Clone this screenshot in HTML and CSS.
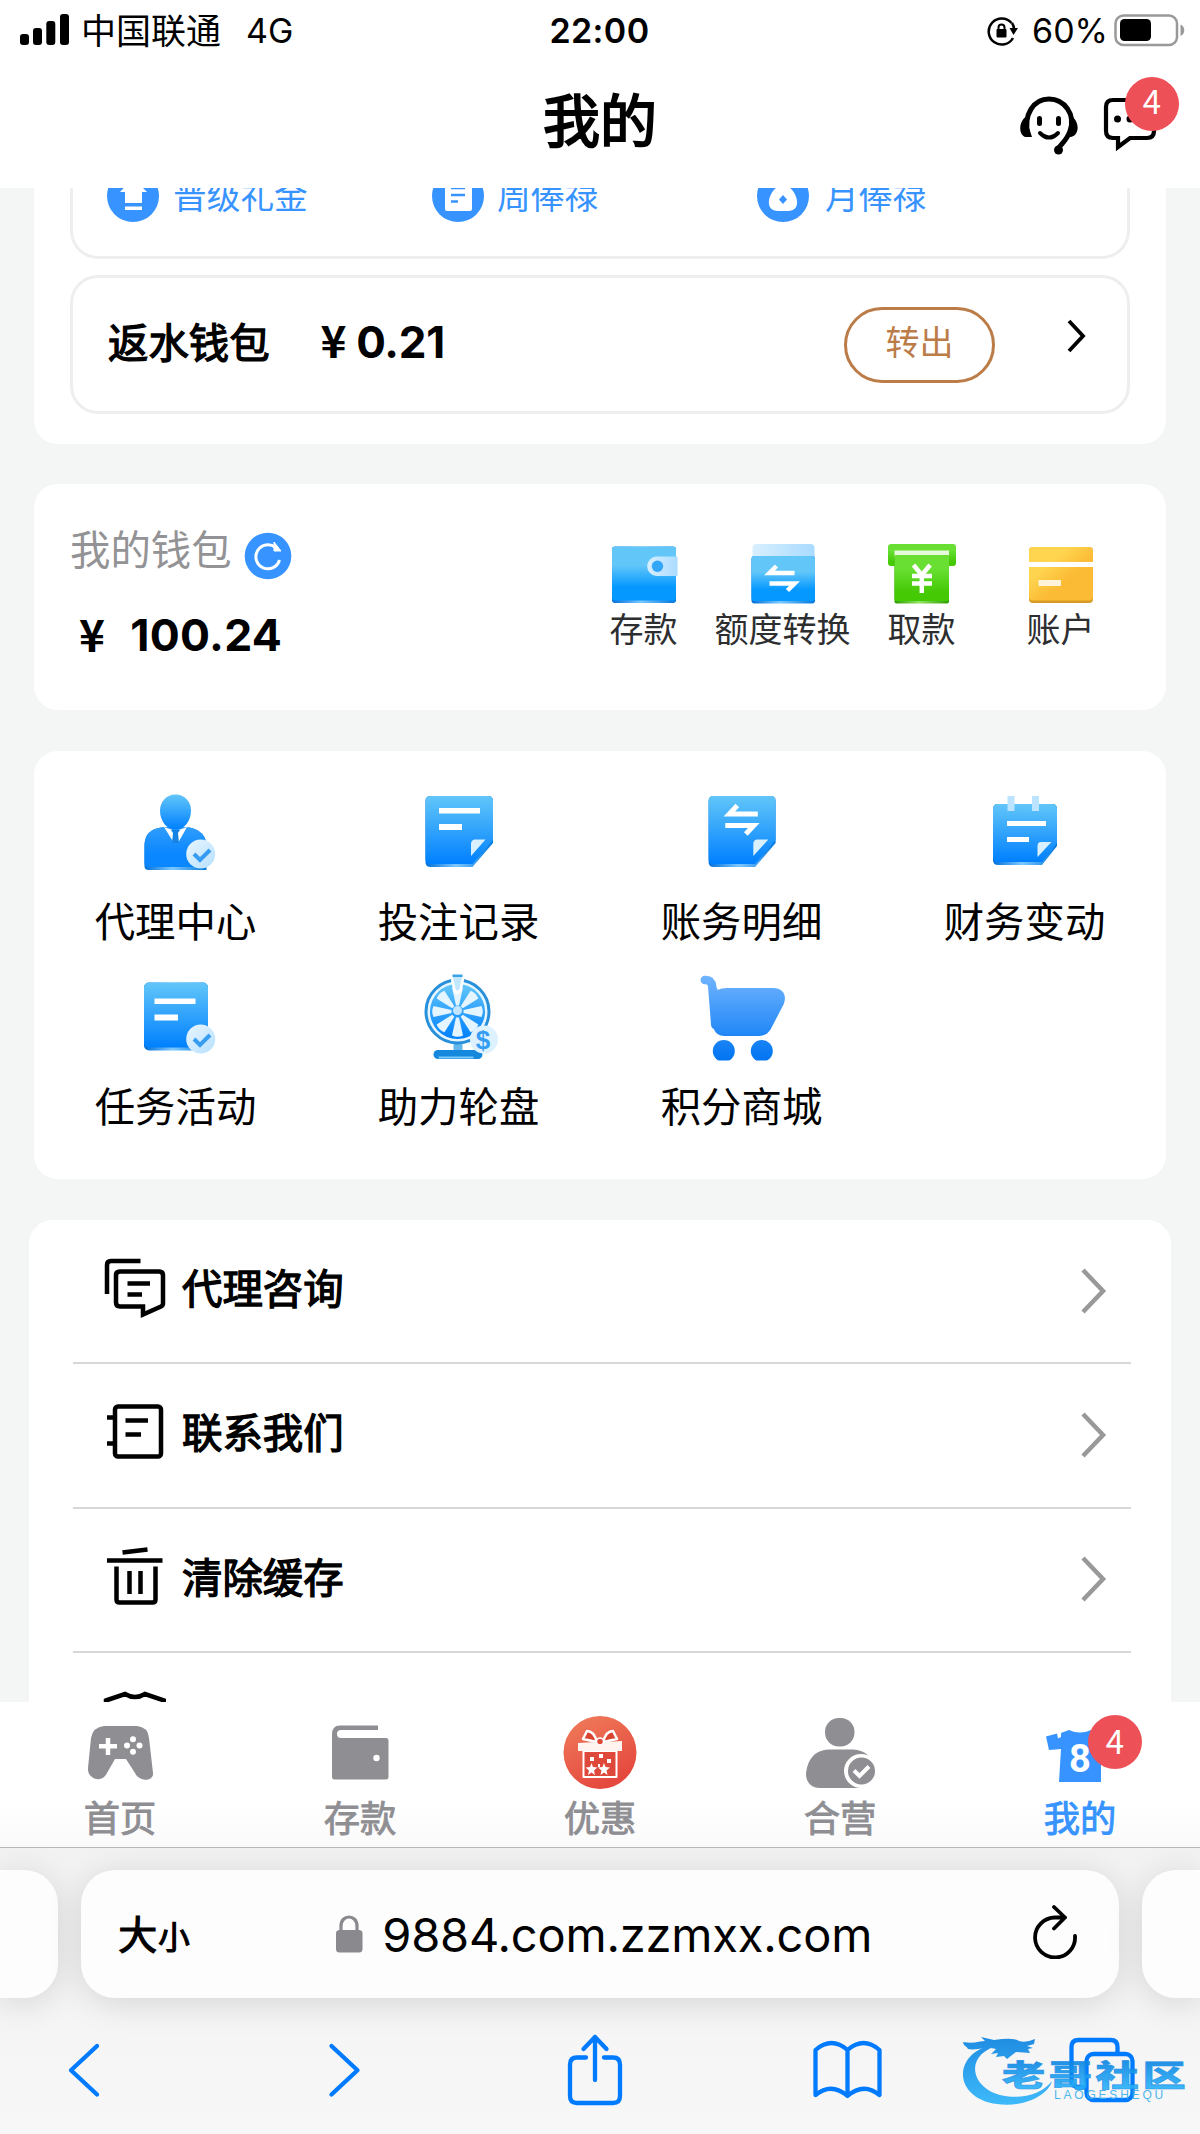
FILE: index.html
```html
<!DOCTYPE html>
<html lang="zh-CN">
<head>
<meta charset="utf-8">
<title>我的</title>
<link rel="stylesheet" href="styles.css">
</head>
<body>
<svg class="defs" width="0" height="0" aria-hidden="true">
  <defs>
    <linearGradient id="blue" x1="0" y1="0" x2="0" y2="1"><stop offset="0" stop-color="#62c6f9"/><stop offset="1" stop-color="#0080ff"/></linearGradient>
    <linearGradient id="body" x1="0" y1="0" x2="0" y2="1"><stop offset="0" stop-color="#2f9dfc"/><stop offset=".7" stop-color="#0a86ff"/></linearGradient>
    <linearGradient id="wallet" x1="0" y1="0" x2="0" y2="1"><stop offset=".35" stop-color="#62c6f9"/><stop offset=".75" stop-color="#0598ff"/></linearGradient>
    <linearGradient id="pale" x1="0" y1="0" x2="1" y2="0"><stop offset="0" stop-color="#d8efff"/><stop offset="1" stop-color="#a9dbff"/></linearGradient>
    <linearGradient id="coin" x1="0" y1="0" x2="1" y2="1"><stop offset="0" stop-color="#eaf6ff"/><stop offset="1" stop-color="#b5e0ff"/></linearGradient>
    <linearGradient id="green" x1="0" y1="0" x2="0" y2="1"><stop offset=".3" stop-color="#68df32"/><stop offset=".8" stop-color="#45c905"/></linearGradient>
    <linearGradient id="gold" x1="0" y1="0" x2="1" y2="1"><stop offset=".3" stop-color="#ffd550"/><stop offset=".6" stop-color="#fbbb35"/></linearGradient>
    <linearGradient id="edge" x1="0" y1="0" x2="1" y2="0"><stop offset="0" stop-color="#006fd9"/><stop offset=".45" stop-color="#7cc8ff"/><stop offset="1" stop-color="#0077dc"/></linearGradient>
    <linearGradient id="gedge" x1="0" y1="0" x2="1" y2="0"><stop offset="0" stop-color="#2da000"/><stop offset=".45" stop-color="#91e55f"/><stop offset="1" stop-color="#2da000"/></linearGradient>
    <linearGradient id="cart" gradientUnits="userSpaceOnUse" x1="0" y1="976" x2="0" y2="1061"><stop offset="0" stop-color="#70b4ff"/><stop offset="1" stop-color="#0074f2"/></linearGradient>
    <linearGradient id="gift" x1="0" y1="0" x2=".5" y2="1"><stop offset="0" stop-color="#f07e5c"/><stop offset="1" stop-color="#e5483e"/></linearGradient>
    <linearGradient id="mark" gradientUnits="userSpaceOnUse" x1="0" y1="2042" x2="0" y2="2108"><stop offset="0" stop-color="#0b84e2"/><stop offset="1" stop-color="#2bb5fb"/></linearGradient>
    <linearGradient id="markText" x1="0" y1="0" x2="0" y2="1"><stop offset=".15" stop-color="#087fdf"/><stop offset=".9" stop-color="#2bb5fb"/></linearGradient>
  </defs>
</svg>

<header class="top">
  <div class="status">
    <div class="status-left">
      <svg width="49" height="31" viewBox="20 13 49 31"><rect x="20" y="33" width="9" height="11" rx="3"/><rect x="33" y="27" width="9" height="17" rx="3"/><rect x="46.300" y="20" width="9" height="24" rx="3"/><rect x="60" y="13" width="9" height="31" rx="3"/></svg>
      <span class="carrier">中国联通</span><span class="network">4G</span>
    </div>
    <div class="clock">22:00</div>
    <div class="status-right">
      <svg width="31" height="30" viewBox="987 16 31 30"><path d="M1011.500 23a13 13 0 1 0 1.500 15M1012 23q2 3 2 6" fill="none" stroke="#000" stroke-width="2.500"/><path d="M1009.500 28h8.500l-4.500 7z"/><rect x="996.500" y="29" width="10" height="8.500" rx="1"/><path d="M998.500 30v-2.500a3 3 0 0 1 6 0V30" fill="none" stroke="#000" stroke-width="2"/></svg>
      <span class="percent">60%</span>
      <svg width="72" height="34" viewBox="1113 12 72 34"><rect x="1115.500" y="14.500" width="61.500" height="29.500" rx="8" fill="none" stroke="#999" stroke-width="2.500"/><rect x="1120" y="18" width="31" height="22" rx="4.500"/><path d="M1180.500 23.500c5 2 5 9.500 0 11.500z" fill="#999"/></svg>
    </div>
  </div>
  <div class="titlebar">
    <h1>我的</h1>
    <div class="title-actions">
      <svg width="60" height="62" viewBox="1019 94 60 62"><path d="M1028 134c-5-21 6-36 21-36s27 15 21 32c-3 9-8 12-12 18" fill="none" stroke="#000" stroke-width="5"/><path d="M1027 115c-9 5-9 21 0 21h5l-3-9zM1071 115c9 5 9 20-1 21l-1-9z"/><circle cx="1058.500" cy="149" r="4.500"/><rect x="1037" y="115" width="5" height="10" rx="2.500"/><rect x="1056" y="115" width="5" height="10" rx="2.500"/><path d="M1040 132q9 9 18 0" fill="none" stroke="#000" stroke-width="4" stroke-linecap="round"/></svg>
      <div class="message">
        <svg width="54" height="58" viewBox="1103 95 54 58"><path d="M1113 100h34q7 0 7 7v24q0 7-7 7h-17l-12 9v-9h-5q-7 0-7-7v-24q0-7 7-7z" fill="none" stroke="#000" stroke-width="4.200"/><circle cx="1117.500" cy="119" r="3.500"/><circle cx="1130" cy="119" r="3.500"/></svg>
        <span class="badge">4</span>
      </div>
    </div>
  </div>
</header>

<main class="content">
  <section class="card bonus-card">
    <div class="bonus-row">
      <div class="bonus"><svg width="52" height="52" viewBox="107 170 52 52"><circle cx="133" cy="196" r="26" fill="#3793ff"/><path d="M133 178l14 14h-5v11h-17v-11h-5zM125 206.500h17v3.500h-17z" fill="#fff"/></svg><span>晋级礼金</span></div>
      <div class="bonus weekly"><svg width="52" height="52" viewBox="107 170 52 52"><circle cx="133" cy="196" r="26" fill="#3793ff"/><rect x="120" y="181" width="27" height="30" rx="2" fill="#fff"/><path d="M126 188h14M126 195h14M126 201.500h7" stroke="#3793ff" stroke-width="2.500"/></svg><span>周俸禄</span></div>
      <div class="bonus monthly"><svg width="52" height="52" viewBox="107 170 52 52"><circle cx="133" cy="196" r="26" fill="#3793ff"/><path d="M127 187l-3-8h18l-3 8c10 8 12 24-1 24h-10c-13 0-11-16-1-24z" fill="#fff"/><path d="M133 195l4 4.500-4 4.500-4-4.500z" fill="#3793ff"/></svg><span>月俸禄</span></div>
    </div>
    <div class="rebate">
      <span class="rebate-name">返水钱包</span>
      <span class="rebate-value"><i class="yen">¥</i>0.21</span>
      <button class="transfer">转出</button>
      <svg class="rebate-arrow" width="22" height="36" viewBox="0 0 22 36"><path d="M3 3l14 15L3 33" fill="none" stroke="#000" stroke-width="3.800"/></svg>
    </div>
  </section>

  <section class="card wallet-card">
    <div class="balance">
      <div class="balance-label"><span>我的钱包</span><svg width="48" height="48" viewBox="0 0 48 48"><circle cx="24" cy="24" r="23.300" fill="#3793ff"/><path d="M31.500 15.500A12 12 0 1 0 35.500 28" fill="none" stroke="#fff" stroke-width="3"/><path d="M30 10v9h7z" fill="#fff" stroke="#fff" stroke-width="1"/></svg></div>
      <div class="balance-value"><i class="yen">¥</i>100.24</div>
    </div>
    <nav class="wallet-actions">
      <a><svg width="70" height="62" viewBox="609 545 70 62"><rect x="612" y="547.500" width="64" height="56.500" rx="3" fill="url(#edge)"/><rect x="612" y="547.500" width="64" height="54" rx="3" fill="url(#wallet)"/><path d="M656 557.500h21.500v19.500H656a9.800 9.800 0 0 1 0-19.500z" fill="url(#pale)"/><circle cx="657.500" cy="567.300" r="5.700" fill="#32a7fa"/></svg><span>存款</span></a>
      <a><svg width="70" height="62" viewBox="747.500 545 70 62"><rect x="752" y="545" width="62" height="24" rx="4" fill="url(#pale)"/><rect x="751" y="557" width="63.500" height="47.500" rx="3" fill="url(#edge)"/><rect x="751" y="557" width="63.500" height="45" rx="3" fill="url(#wallet)"/><path d="M794 574h-25l7-7M769 584.500h25l-7 7" fill="none" stroke="#fff" stroke-width="4.500"/></svg><span>额度转换</span></a>
      <a><svg width="70" height="62" viewBox="887 545 70 62"><rect x="888" y="545" width="68" height="22" rx="3" fill="url(#green)"/><rect x="894.500" y="551.500" width="54.500" height="8" fill="#e5f9db"/><rect x="894.500" y="556" width="54.500" height="48.500" rx="2" fill="url(#gedge)"/><rect x="894.500" y="556" width="54.500" height="46" rx="2" fill="url(#green)"/><path d="M913.500 566l8.300 10 8.300-10M912 577h20M912 584.500h20M921.800 576v18" fill="none" stroke="#fff" stroke-width="4.500"/></svg><span>取款</span></a>
      <a><svg width="70" height="62" viewBox="1026 545 70 62"><rect x="1029" y="548" width="64" height="56" rx="4" fill="#d59b25"/><rect x="1029" y="548" width="64" height="53.500" rx="4" fill="url(#gold)"/><path d="M1028.500 563h65v5h-65z" fill="#fff"/><path d="M1038.500 581h22.500v6h-22.500z" fill="#fff4d9"/></svg><span>账户</span></a>
    </nav>
  </section>

  <section class="card services">
    <a><svg width="90" height="92" viewBox="131 786 90 92"><path d="M144.500 846c0-14 9-18 20-19h21c11 1 21 6 21 20v23h-58q-4 0-4-4z" fill="url(#edge)"/><path d="M144.500 846c0-14 9-18 20-19h21c11 1 21 6 21 20v20h-58q-4 0-4-4z" fill="url(#body)"/><path d="M164 827l10 16 1.500-12zM187 827l-9 16-2-12z" fill="#fff"/><path d="M175.500 794.500c9 0 15.500 7 15.500 16 0 11-7 19-15.500 19s-15.500-8-15.500-19c0-9 6.500-16 15.500-16z" fill="url(#blue)"/><path d="M171 830h9l-2 3 1 10h-7l1-10z" fill="#1683e4"/><circle cx="200.700" cy="854" r="14.500" fill="url(#coin)"/><path d="M194 854l6 6 10-10" fill="none" stroke="#369df3" stroke-width="4"/></svg><span>代理中心</span></a>
    <a><svg width="90" height="92" viewBox="413.500 786 90 92"><path d="M430 796h57.500q5 0 5 5v42L472 867h-42q-5 0-5-5v-61q0-5 5-5z" fill="url(#edge)"/><path d="M430 796h57.500q5 0 5 5v39L472 864h-42q-5 0-5-5v-58q0-5 5-5z" fill="url(#blue)"/><path d="M438.500 808h41v5.500h-41zM438.500 824h23v6h-23z" fill="#fff"/><path d="M474 839.500h11L470.500 856v-12q0-4 3.500-4.500z" fill="#d9f0ff"/></svg><span>投注记录</span></a>
    <a><svg width="90" height="92" viewBox="696.200 786 90 92"><path d="M712.800 796h57q5 0 5 5v42L754.300 867h-41.500q-5 0-5-5v-61q0-5 5-5z" fill="url(#edge)"/><path d="M712.800 796h57q5 0 5 5v39L754.300 864h-41.500q-5 0-5-5v-58q0-5 5-5z" fill="url(#blue)"/><path d="M757 814h-28.500l8-8.500M724.500 825.500h28.500l-8 8.500" fill="none" stroke="#fff" stroke-width="5"/><path d="M756 839.500h11.500L752.500 856v-12q0-4 3.500-4.500z" fill="#d9f0ff"/></svg><span>账务明细</span></a>
    <a><svg width="90" height="92" viewBox="979 786 90 92"><path d="M997 804h54q5 0 5 5v37L1041 865h-44q-5 0-5-5v-51q0-5 5-5z" fill="url(#edge)"/><path d="M997 804h54q5 0 5 5v34L1041 862h-44q-5 0-5-5v-48q0-5 5-5z" fill="url(#blue)"/><path d="M1006.500 796h7v15h-7zM1031 796h7v15h-7z" fill="#bce3ff"/><path d="M1006 821h39v5h-39zM1006 837h22v5h-22z" fill="#fff"/><path d="M1040 842h10.500L1036.500 857v-11q0-4 3.500-4z" fill="#d9f0ff"/></svg><span>财务变动</span></a>
    <a><svg width="90" height="92" viewBox="131 971.500 90 92"><rect x="144" y="983" width="64" height="68" rx="5" fill="url(#edge)"/><rect x="144" y="983" width="64" height="65" rx="5" fill="url(#blue)"/><path d="M154.500 999h41v5.500h-41zM154.500 1015h23.500v6h-23.500z" fill="#fff"/><circle cx="200.700" cy="1039.500" r="14.500" fill="url(#coin)"/><path d="M194 1039.500l6 6 10-10" fill="none" stroke="#369df3" stroke-width="4"/></svg><span>任务活动</span></a>
    <a><svg width="90" height="92" viewBox="413.500 971.500 90 92"><path d="M453 1044h9v8h-9z" fill="#62b7eb"/><rect x="433" y="1050.500" width="49" height="9" rx="4.500" fill="#1488dc"/><path d="M438 1057h35v2h-35z" fill="#78c9f8"/><circle cx="457" cy="1012" r="31.500" fill="#e6f6ff" stroke="#288fda" stroke-width="3"/><circle cx="457" cy="1012" r="27.500" fill="url(#blue)"/><g fill="#e4f5ff"><path id="spoke" d="M455.500 1006l-4-18q5.500-2.500 11 0l-4 18z"/><use href="#spoke" transform="rotate(45 457 1012)"/><use href="#spoke" transform="rotate(90 457 1012)"/><use href="#spoke" transform="rotate(135 457 1012)"/><use href="#spoke" transform="rotate(180 457 1012)"/><use href="#spoke" transform="rotate(225 457 1012)"/><use href="#spoke" transform="rotate(270 457 1012)"/><use href="#spoke" transform="rotate(315 457 1012)"/></g><circle cx="457" cy="1011" r="4.500" fill="#c2e6ff"/><path d="M449 974h16l-4 18q-4 5-8 0z" fill="#fff"/><path d="M452 975.500h10l-3 14q-2 3-4 0z" fill="#c2e8ff"/><path d="M452 975h10v2.500h-10z" fill="#3ba2e9"/><circle cx="483.500" cy="1040" r="14" fill="#ddf1ff"/><text class="dollar" x="482.500" y="1049">$</text></svg><span>助力轮盘</span></a>
    <a><svg width="90" height="92" viewBox="696.200 971.500 90 92"><path d="M704 980.500h1q6 0 6.500 7l3 38" fill="none" stroke="url(#cart)" stroke-width="8.500" stroke-linecap="round"/><path d="M710 988.500h62c11 0 14 8 11 16l-13 25q-4 7-12 7h-34q-11 0-12-12z" fill="url(#cart)"/><path d="M716.500 976h10v12.500q-6 0-10 2z" fill="#fff"/><circle cx="723" cy="1051.500" r="11" fill="url(#cart)"/><circle cx="761" cy="1051.500" r="11" fill="url(#cart)"/><path d="M710 1061h64v3h-64z" fill="#fff"/></svg><span>积分商城</span></a>
  </section>

  <section class="menu">
    <a><svg width="64" height="64" viewBox="102 1258 64 64"><path d="M107 1295v-29q0-4 4-4h29.500" /><path d="M120 1272.500h39q4 0 4 4v28q0 2-2 3l-18 8v-8h-23q-4 0-4-4v-27q0-4 4-4zM127.500 1284.500h22.500M127.500 1295.500h14.500"/></svg><span>代理咨询</span><svg class="next" width="30" height="48" viewBox="0 0 30 48"><path d="M4 3l20 21L4 45"/></svg></a>
    <a><svg width="64" height="64" viewBox="102 1402.500 64 64"><rect x="115" y="1408" width="46" height="50" rx="3"/><path d="M107 1419h8M107 1445h8M125.500 1422h22.500M125.500 1436h15.500"/></svg><span>联系我们</span><svg class="next" width="30" height="48" viewBox="0 0 30 48"><path d="M4 3l20 21L4 45"/></svg></a>
    <a><svg width="64" height="64" viewBox="102 1547 64 64"><path d="M107 1561.500h55.500M122.500 1553.500l25-3M116.500 1567.500v33q0 3 3 3h33q3 0 3-3v-33M129.500 1572v23M140.500 1572v23"/></svg><span>清除缓存</span><svg class="next" width="30" height="48" viewBox="0 0 30 48"><path d="M4 3l20 21L4 45"/></svg></a>
    <a><svg width="64" height="64" viewBox="102 1691.500 64 64"><path d="M106 1702l19-6.500q10 6 20 0l19 6.500v16h-10v30h-38v-30h-10z"/></svg></a>
  </section>
</main>

<nav class="tabbar">
  <a><svg width="76" height="76" viewBox="82 1715 76 76"><path d="M104 1726h33q11 1 12 12l4 35c1 9-14 9-18 0l-9-14h-11l-8 14c-5 11-20 6-19-5l3-30q2-11 13-12z"/><path d="M108 1738v17M99 1746.200h18" stroke="#fff" stroke-width="4.500"/><g fill="#fff"><circle cx="133" cy="1739.300" r="3"/><circle cx="127" cy="1745.500" r="3"/><circle cx="139.500" cy="1745.500" r="3"/><circle cx="133" cy="1751.700" r="3"/></g></svg><span>首页</span></a>
  <a><svg width="76" height="76" viewBox="322 1715 76 76"><path d="M340 1725.500h38v4.500h-37q-4 0-4 4t4 4h45q2.500 0 2.500 3v36q0 2.500-3 2.500h-51q-2.500 0-2.500-3v-42q0-9 8-9z"/><circle cx="376.500" cy="1758" r="3.200" fill="#fff"/></svg><span>存款</span></a>
  <a><svg width="76" height="76" viewBox="562 1715 76 76"><circle cx="600" cy="1752.500" r="36.500" fill="url(#gift)"/><path d="M583.500 1751h33v26h-33z" fill="#df493b" stroke="#fff" stroke-width="2" stroke-linejoin="round"/><path d="M597 1742l-14-3 4-8q7 0 10 11zM603 1742l14-3-4-8q-7 0-10 11z" fill="#d9432f" stroke="#fff" stroke-width="2.500" stroke-linejoin="round"/><path d="M578 1743l18-1h8l18-1v10h-44z" fill="#fff4ef"/><circle cx="600" cy="1741.500" r="3.500" fill="#df493b" stroke="#fff" stroke-width="1.500"/><path d="M591.500 1763l1.500 4 4.500.500-3.500 3 1 4.500-3.500-2.500-3.500 2.500 1-4.500-3.500-3 4.500-.5zM604 1763l1.500 4 4.500.500-3.500 3 1 4.500-3.500-2.500-3.500 2.500 1-4.500-3.500-3 4.500-.5z" fill="#fff"/><path d="M590 1757h4v4h-4zM599 1754h4v4h-4zM607 1759h4v4h-4zM598 1764h2v3h-2z" fill="#fff"/></svg><span>优惠</span></a>
  <a><svg width="76" height="76" viewBox="802 1715 76 76"><rect x="825" y="1718" width="29.500" height="28.500" rx="14"/><path d="M829 1749.500h24q19 1 20 20 0 18-13 18.500h-40c-10 0-14-7-14-14 1-12 7-24 23-24.500z"/><circle cx="861" cy="1771" r="17" fill="#fff"/><path d="M860 1784h18v7h-18z" fill="#fff"/><circle cx="861.500" cy="1771" r="13.500"/><path d="M854 1770.500l5.500 5.500 9.500-9.500" fill="none" stroke="#fff" stroke-width="4"/></svg><span>合营</span></a>
  <a class="active"><svg width="76" height="76" viewBox="1042 1715 76 76"><path d="M1046 1736.500l11-3 1 5 3-1.500v-4l8-3q11 5 22 0l20 6v13h-10v33h-42l2-33-12 1z"/><text class="jersey" x="1080" y="1771.500">8</text></svg><span>我的</span><span class="badge">4</span></a>
</nav>

<footer class="browser">
  <div class="address-row">
    <div class="side-tab left"></div>
    <div class="address">
      <span class="text-size">大<small>小</small></span>
      <span class="domain"><svg width="28" height="40" viewBox="335 1914 28 40"><rect x="336" y="1930" width="26.500" height="22.500" rx="3.500" fill="#8a8a8e"/><path d="M341 1931v-5c0-12 16-12 16 0v5" fill="none" stroke="#8a8a8e" stroke-width="3.200"/></svg><b>9884.com.zzmxx.com</b></span>
      <svg class="reload" width="48" height="56" viewBox="1031 1904 48 56"><path d="M1065 1918.500h-10a20 20 0 1 0 20 18.500M1054 1908l11 10.500-11 11" fill="none" stroke="#000" stroke-width="3.800" stroke-linecap="round" stroke-linejoin="round"/></svg>
    </div>
    <div class="side-tab right"></div>
  </div>
  <div class="toolbar">
    <svg width="34" height="56" viewBox="67 2042 34 56"><path d="M97 2046l-26 24.300 26 24.200"/></svg>
    <svg width="34" height="56" viewBox="327 2042 34 56"><path d="M331.500 2046l26 24.300-26 24.200"/></svg>
    <svg width="58" height="74" viewBox="565.500 2031 58 74"><path d="M585.500 2055.500h-9q-7 0-7 7v31.500q0 7 7 7h36q7 0 7-7v-31.500q0-7-7-7h-9M594.500 2078v-43M583 2047l11.500-12 11.500 12"/></svg>
    <svg width="72" height="62" viewBox="812 2040 72 62"><path d="M847.500 2097v-46q-16-14-32 0v45q16-13 32 1 16-14 32-1v-45q-16-14-32 0"/></svg>
    <svg width="68" height="68" viewBox="1068 2036 68 68"><path d="M1084.500 2087h-6q-7 0-7-7v-33q0-7 7-7h32q7 0 7 7v7"/><rect x="1086.500" y="2054" width="46" height="46" rx="7"/></svg>
  </div>
  <svg class="watermark" width="230" height="84" viewBox="958 2030 230 84"><path d="M1000 2045c-49 3-51 54-4 60 25 4 51-8 55-23-17 23-67 21-76-6-4-14 5-25 25-31z" fill="url(#mark)"/><path d="M962 2043c11 2 17-1 22-1l-4-4 13 3q20-3 25 1 7 2 16-2l-1 5-7 2 6 2-5 1 2 4-14-1-9 7-3-3-8 1 2-4-7 1 5-5c-10-3-21 2-28 0-2-4-4-2-5-7z" fill="url(#mark)"/><text class="mark-name" transform="translate(1001 2087) scale(1.440 1)" fill="url(#markText)">老哥社区</text><text class="mark-latin" x="1053" y="2100">LAOGESHEQU</text></svg>
</footer>
</body>
</html>
```
FILE: styles.css
```css
* { box-sizing: border-box; }
body {
  display: flex;
  flex-direction: column;
  position: relative;
  width: 1200px;
  height: 2134px;
  margin: 0;
  overflow: hidden;
  background: #f4f6f6;
  color: #000;
  font-family: Inter, "Noto Sans CJK SC", sans-serif;
}
svg { display: block; flex: none; }
.defs { position: absolute; }
i, b, small { font-style: normal; font-weight: inherit; }

/* Status bar and page title */
.top { height: 188px; flex: none; background: #fff; }
.status {
  display: grid;
  grid-template-columns: 1fr auto 1fr;
  align-items: center;
  height: 60px;
  padding: 0 15px 0 20px;
  font-size: 34px;
  line-height: 60px;
}
.status-left, .status-right { display: flex; align-items: center; height: 60px; }
.status-left svg { margin-top: -3px; }
.carrier { margin-left: 12px; font-size: 35px; }
.network { margin-left: 25px; }
.clock { margin: 1px 6px 0 0; font-weight: 600; letter-spacing: 0.400px; }
.status-right { justify-content: flex-end; }
.percent { margin: 1px 5px 0 14px; }
.status-right svg:last-child { margin-top: -2px; }
.titlebar {
  display: grid;
  grid-template-columns: 1fr auto 1fr;
  align-items: center;
  height: 128px;
  padding: 0 43px;
}
h1 {
  grid-column: 2;
  margin: -4px 0 0;
  font-size: 57px;
  line-height: 80px;
  font-weight: 400;
  -webkit-text-stroke: 2px;
}
.title-actions { display: flex; justify-content: flex-end; gap: 24px; margin-top: 3px; }
.message { position: relative; }
.badge {
  position: absolute;
  width: 54px;
  height: 54px;
  border-radius: 50%;
  background: #ed5056;
  color: #fff;
  font: 400 33px/51px "Noto Sans CJK SC", sans-serif;
  text-align: center;
}
.message .badge { left: 22px; top: -18px; line-height: 47px; }

/* Scrolling content */
.content { height: 1514px; flex: none; overflow: hidden; }
.card { margin: 0 34px 40.500px; border-radius: 24px; background: #fff; }
.bonus-card { height: 255.500px; padding: 0 36px; border-radius: 0 0 24px 24px; }
.bonus-row {
  display: flex;
  height: 70.500px;
  padding-left: 34px;
  overflow: hidden;
  border: 3px solid #eee;
  border-top: 0;
  border-radius: 0 0 28px 28px;
  color: #3793ff;
  font-size: 33.700px;
}
.bonus { display: flex; align-items: center; width: 325px; height: 52px; margin-top: -18px; }
.bonus span { margin: 2px 0 0 14px; line-height: 48px; }
.weekly span { margin-left: 13px; }
.monthly span { margin-left: 16px; }
.rebate {
  display: flex;
  align-items: center;
  height: 139px;
  margin-top: 16.500px;
  padding: 0 39px 0 35px;
  border: 3px solid #eee;
  border-radius: 28px;
}
.rebate-name { margin-top: -8px; font-size: 40.400px; -webkit-text-stroke: 1.300px; }
.rebate-value { margin: -5px auto 0 51px; font-size: 44px; font-weight: 700; letter-spacing: -0.300px; }
.yen { display: inline-block; font-family: "Noto Sans CJK SC", sans-serif; font-size: 44px; line-height: 1; }
.rebate-value .yen { margin-right: 10px; }
.transfer {
  width: 151px;
  height: 76px;
  padding: 0 0 8px;
  border: 3px solid #bc7c48;
  border-radius: 38px;
  background: none;
  color: #bc7c48;
  font: 400 34px/60px "Noto Sans CJK SC", sans-serif;
}
.rebate-arrow { margin: -17px 0 0 71px; }

.wallet-card { display: flex; justify-content: space-between; height: 226px; padding: 0 36px; }
.balance { padding-top: 36px; }
.balance-label { display: flex; height: 58px; align-items: center; color: #939396; font-size: 40.400px; }
.balance-label span { margin-top: -3px; }
.balance-label svg { margin: 14px 0 0 12px; }
.balance-value { display: flex; align-items: center; height: 60px; margin-top: 27px; padding-left: 9px; font-size: 44.500px; font-weight: 700; letter-spacing: 0.300px; }
.balance-value .yen { margin-right: 25px; margin-top: -5px; }
.wallet-actions { display: grid; grid-template-columns: repeat(4, 139px); padding-top: 60px; }
.wallet-actions a { display: flex; flex-direction: column; align-items: center; color: #2d2e30; font-size: 34px; line-height: 48px; white-space: nowrap; }

.services { display: grid; grid-template-columns: repeat(4, 1fr); grid-auto-rows: 185.500px; height: 428.500px; margin-bottom: 41px; padding-top: 35px; }
.services a { display: flex; flex-direction: column; align-items: center; font-size: 40.400px; line-height: 60px; }
.services svg { margin-bottom: 15px; }
.dollar { fill: #359df3; font: 700 26px "Liberation Sans", sans-serif; text-anchor: middle; }

.menu { margin: 0 29px; padding: 0 40.500px 0 43.500px; border-radius: 24px 24px 0 0; background: #fff; }
.menu a { display: flex; align-items: center; height: 144.300px; padding: 0 22px 4px 29.500px; border-bottom: 2px solid #d8d8d8; font-size: 40.400px; }
.menu svg { fill: none; stroke: #000; stroke-width: 4.500px; }
.menu span { margin: 2px auto 0 16px; line-height: 60px; -webkit-text-stroke: 1.300px; }
.menu .next { margin-top: 3px; stroke: #999; stroke-width: 4.500px; }

/* Application tabs */
.tabbar {
  display: grid;
  grid-template-columns: repeat(5, 240px);
  height: 146px;
  flex: none;
  border-bottom: 1.500px solid #b8b8ba;
  background: linear-gradient(#fff 70%, #fafafa);
  color: #8e8e93;
  font-size: 36.300px;
}
.tabbar a { position: relative; display: flex; flex-direction: column; align-items: center; padding-top: 13px; line-height: 57px; -webkit-text-stroke: 0.900px; }
.tabbar svg { fill: currentColor; -webkit-text-stroke: 0; }
.tabbar .active { color: #3793ff; }
.tabbar .badge { left: 128px; top: 13px; -webkit-text-stroke: 0; }
.jersey { fill: #fff; font: 700 38px Roboto, sans-serif; text-anchor: middle; }

/* Browser controls */
.browser { position: relative; height: 286px; padding-top: 22px; overflow: hidden; background: linear-gradient(#f2f2f2, #f7f7f7); }
.address-row { display: grid; grid-template-columns: 58px 1037.500px 58px; justify-content: space-between; height: 127.500px; }
.address, .side-tab { border-radius: 34px; background: #fdfdfd; box-shadow: 0 5px 35px rgba(0, 0, 0, .13); }
.side-tab.left { border-radius: 0 34px 34px 0; }
.side-tab.right { border-radius: 34px 0 0 34px; }
.address { display: grid; grid-template-columns: 217px 1fr auto; align-items: center; padding: 0 40px 0 37px; }
.text-size { margin-top: 5px; font-size: 39px; line-height: 60px; -webkit-text-stroke: 1.200px; }
.text-size small { margin-left: 1px; font-size: 31.500px; }
.domain { display: flex; align-items: center; font-size: 47px; white-space: nowrap; }
.domain b { margin: 2px 0 0 19px; letter-spacing: -0.200px; }
.reload { margin-top: -5px; }
.toolbar {
  display: grid;
  grid-template-columns: 34px 34px 58px 72px 68px;
  column-gap: 0;
  justify-content: space-between;
  align-items: center;
  height: 120px;
  margin-top: 12px;
  padding: 0 64px 0 67px;
}
.toolbar {
  grid-template-columns: 260px 238.500px 246.500px 256px 68px;
  justify-content: start;
  padding-right: 0;
}
.toolbar svg { fill: none; stroke: #007aff; stroke-width: 4.300px; stroke-linecap: round; stroke-linejoin: round; }
.watermark { position: absolute; left: 959px; top: 181px; opacity: .9; }
.mark-name { font: 900 30px "Noto Sans CJK SC", sans-serif; letter-spacing: 2.500px; stroke: #168be6; stroke-width: 0.600px; }
.mark-latin { fill: #3cafec; font: 400 12px "Liberation Sans", sans-serif; letter-spacing: 2.800px; }
```
